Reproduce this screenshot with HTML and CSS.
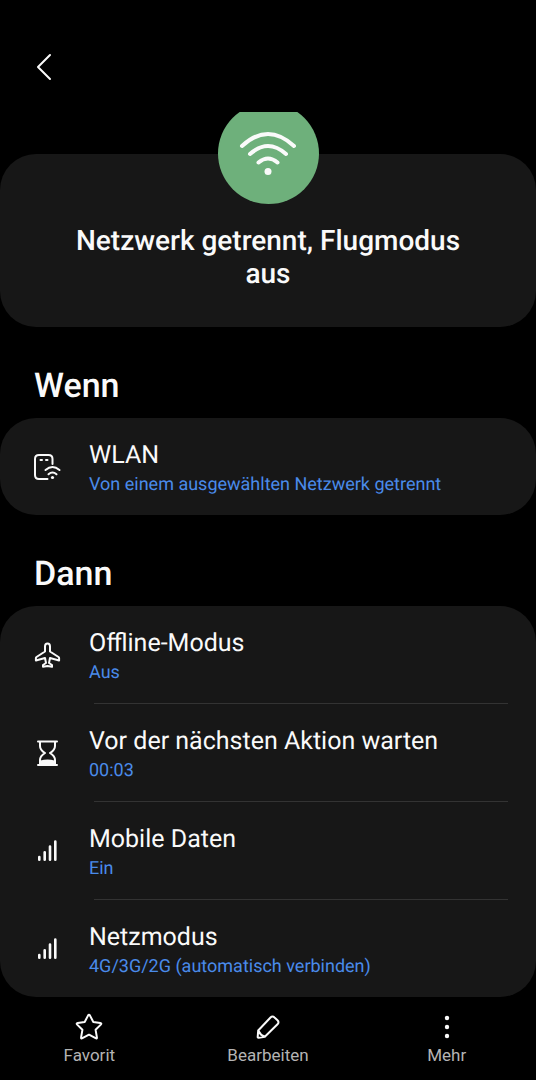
FILE: index.html
```html
<!DOCTYPE html>
<html lang="de">
<head>
<meta charset="utf-8">
<meta name="viewport" content="width=device-width, initial-scale=1">
<title>Netzwerk getrennt, Flugmodus aus</title>
<link rel="stylesheet" href="styles.css">
</head>
<body>
<div class="screen">
  <header class="topbar">
    <button class="back" type="button" aria-label="Zurück">
      <svg width="20" height="30" viewBox="0 0 20 30"><path d="M16 3 4 15l12 12" /></svg>
    </button>
  </header>

  <main class="content">
    <section class="card hero">
      <div class="badge">
        <svg width="60" height="48" viewBox="0 0 60 48">
          <path d="M4 18Q30-6 56 18M12 26q18-16 36 0M20.500 34.500q9.500-8 19 0" />
          <circle cx="30" cy="43.500" r="3.500" />
        </svg>
      </div>
      <h1 class="title">Netzwerk getrennt, Flugmodus aus</h1>
    </section>

    <h2 class="heading">Wenn</h2>
    <ul class="card list">
      <li class="row">
        <svg class="icon" width="28" height="28" viewBox="0 0 28 28">
          <path d="M14.500 26H6q-4 0-4-4V6q0-4 4-4h9.500q4 0 4 4v5" />
          <path d="M7.500 7h1.500M13 7h1.500" />
          <path d="M12.500 17q7-6 14 0M15.500 21.300q4-3.500 8 0" />
          <circle class="solid" cx="19.500" cy="24.500" r="1.600" />
        </svg>
        <div class="text"><span class="name">WLAN</span><span class="value">Von einem ausgewählten Netzwerk getrennt</span></div>
      </li>
    </ul>

    <h2 class="heading">Dann</h2>
    <ul class="card list">
      <li class="row">
        <svg class="icon" width="28" height="28" viewBox="0 0 28 28">
          <path d="M14.500 2.500q-2.500 0-2.500 3v5L3.500 16q-.600.400-.600 1v2.500l9.100-2.500 1 5-3 2v1.800l4.500-.800 4.500.800V24l-3-2 1-5 9.100 2.500V17q0-.600-.600-1L17 10.500v-5q0-3-2.500-3z" />
        </svg>
        <div class="text"><span class="name">Offline-Modus</span><span class="value">Aus</span></div>
      </li>
      <li class="row">
        <svg class="icon" width="28" height="28" viewBox="0 0 28 28">
          <path d="M5 2.500h19M5 26h19M7 2.500v4.500q0 4 5 7-5 3-5 7v5M22 2.500v4.500q0 4-5 7 5 3 5 7v5" />
          <path class="solid" d="M7.500 21.500q7-2 14 0V26h-14z" />
        </svg>
        <div class="text"><span class="name">Vor der nächsten Aktion warten</span><span class="value">00:03</span></div>
      </li>
      <li class="row">
        <svg class="icon bars" width="28" height="28" viewBox="0 0 28 28"><path d="M6.300 20v2.700M11.700 15.300v7.400M17 9.600v13.100M22.300 4.600v18.100" /></svg>
        <div class="text"><span class="name">Mobile Daten</span><span class="value">Ein</span></div>
      </li>
      <li class="row">
        <svg class="icon bars" width="28" height="28" viewBox="0 0 28 28"><path d="M6.300 20v2.700M11.700 15.300v7.400M17 9.600v13.100M22.300 4.600v18.100" /></svg>
        <div class="text"><span class="name">Netzmodus</span><span class="value">4G/3G/2G (automatisch verbinden)</span></div>
      </li>
    </ul>
  </main>

  <nav class="actions">
    <button class="action" type="button">
      <svg class="icon" width="28" height="28" viewBox="0 0 28 28"><path d="M13 2.600q1-1.600 2 0l3.300 6.400 7 1q1.700.300.500 1.600l-5.200 5.200 1.300 7.500q.200 1.700-1.300.900L14 21.700l-6.600 3.500q-1.500.800-1.300-.900l1.300-7.500-5.200-5.200Q1 10.300 2.700 10l7-1z" /></svg>
      Favorit
    </button>
    <button class="action" type="button">
      <svg class="icon pencil" width="28" height="28" viewBox="0 0 28 28"><path d="M4.200 17.500 16.500 4.500q2-2 4 0l3 2.800q2 2 0 4L10.800 23.800l-6.200 1q-1 .100-.900-.900zM4.200 17.500q2 4.500 6.600 6.300" /></svg>
      Bearbeiten
    </button>
    <button class="action" type="button">
      <svg class="dots" width="28" height="28" viewBox="0 0 28 28"><circle cx="14" cy="5" r="2.200" /><circle cx="14" cy="14" r="2.200" /><circle cx="14" cy="23" r="2.200" /></svg>
      Mehr
    </button>
  </nav>
</div>
</body>
</html>
```
FILE: styles.css
```css
* {
  box-sizing: border-box;
}

body {
  margin: 0;
  background: #000;
  color: #fafafa;
  font-family: Roboto, "Liberation Sans", sans-serif;
  text-rendering: geometricPrecision;
}

button {
  border: 0;
  padding: 0;
  background: none;
  color: inherit;
  font: inherit;
}

svg {
  display: block;
  fill: none;
  stroke: #fafafa;
  stroke-width: 2;
  stroke-linecap: round;
  stroke-linejoin: round;
}

.screen {
  display: flex;
  flex-direction: column;
  min-height: 100vh;
}

.topbar {
  display: flex;
  align-items: center;
  height: 112px;
  padding: 22px 34px 0;
}

.content {
  flex: 1;
  padding-top: 42px;
  overflow: hidden;
}

.card {
  margin: 0;
  border-radius: 36px;
  background: #171717;
}

.hero {
  display: flex;
  flex-direction: column;
  align-items: center;
  padding: 0 64px 37px;
}

.badge {
  display: flex;
  align-items: center;
  justify-content: center;
  width: 101px;
  height: 101px;
  margin-top: -51px;
  padding-bottom: 4px;
  border-radius: 50%;
  background: #6eb07b;
}

.badge svg {
  stroke-width: 4;
}

.badge circle,
.solid,
.dots {
  fill: #fafafa;
  stroke: none;
}

.title {
  margin: 20px 0 0;
  font-size: 28px;
  font-weight: 500;
  line-height: 33px;
  text-align: center;
}

.heading {
  margin: 0;
  padding: 39px 34px 12px;
  font-size: 34px;
  font-weight: 500;
  line-height: 40px;
}

.list {
  padding: 0;
  list-style: none;
}

.row {
  display: flex;
  align-items: center;
  gap: 28px;
  padding: 0 28px 0 33px;
}

.text {
  position: relative;
  display: flex;
  flex: 1;
  flex-direction: column;
  padding: 22px 0 17px;
}

.row + .row {
  padding-top: 1px;
}

.row:not(:last-child) .text::after {
  content: "";
  position: absolute;
  right: 0;
  bottom: -1px;
  left: 5px;
  height: 1px;
  background: #333;
}

.name {
  font-size: 25px;
  line-height: 32px;
}

.value {
  color: #4a8bea;
  font-size: 18px;
  line-height: 26px;
}

.bars {
  stroke-width: 2.6;
}

.actions {
  display: grid;
  grid-template-columns: repeat(3, 1fr);
  height: 83px;
}

.action {
  display: flex;
  flex-direction: column;
  align-items: center;
  gap: 3px;
  padding-top: 16px;
  color: #b4b4b4;
  font-size: 17px;
  line-height: 22px;
}
```
